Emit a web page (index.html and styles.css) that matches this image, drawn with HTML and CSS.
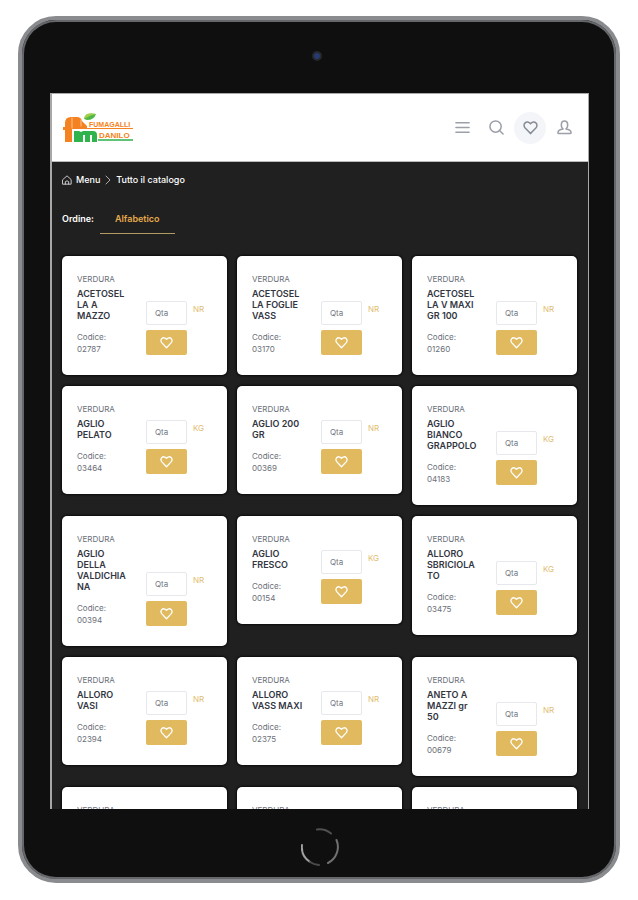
FILE: index.html
```html
<!DOCTYPE html>
<html lang="it">
  <head>
    <title>Tutto il catalogo</title>
    <meta charset="utf-8">
    <meta name="viewport" content="width=device-width, initial-scale=1">
    <link rel="stylesheet" href="styles.css">
  </head>
  <body>

  <svg class="symbols" aria-hidden="true">
    <symbol id="heart" viewBox="0 0 16 16">
      <path d="M8 14.500 2.300 8.500C.7 6.700.8 4.300 2.300 3 3.900 1.600 6.300 1.900 8 4 9.700 1.900 12.100 1.600 13.700 3c1.500 1.300 1.600 3.700 0 5.500Z"/>
    </symbol>
  </svg>

  <div class="tablet">
    <div class="camera"></div>

    <div class="screen">
      <header class="header">
        <a class="logo" href="#">
          <svg viewBox="0 0 70 30" role="img" aria-label="Fumagalli Danilo">
            <path fill="#f58220" d="M2 29V17H0v-3h2V10q0-6 6-6h6q4 0 5 4l5 5v3H9v13z"/>
            <path stroke="#fbc08e" fill="none" d="M9 5v10M18 7v6"/>
            <path fill="#2fb44b" d="M11 29V18h5l2 1 2-1h10q4 0 4 4v7h-5v-7h-2v7h-5v-7h-2v7z"/>
            <path fill="#4fb848" d="M21 6q1-7 12-5-2 6-9 6z"/>
            <path fill="#a6cf46" d="M21 6q1-7 12-5-6 1-12 5z"/>
            <text x="26" y="14" class="logo-text">FUMAGALLI</text>
            <path fill="#f58220" d="M23 15h47v1H23z"/>
            <text x="36" y="25" class="logo-text logo-text-big">DANILO</text>
            <path fill="#5fc477" d="M35 26h35v2H35z"/>
          </svg>
        </a>
        <nav class="tools">
          <button class="tool" aria-label="Menu">
            <svg viewBox="0 0 16 16"><path d="M1 3h14M1 8h14M1 13h14"/></svg>
          </button>
          <button class="tool" aria-label="Cerca">
            <svg viewBox="0 0 16 16"><circle cx="7" cy="7" r="6"/><path d="m11 11 4 4"/></svg>
          </button>
          <button class="tool active" aria-label="Preferiti">
            <svg><use href="#heart"/></svg>
          </button>
          <button class="tool" aria-label="Profilo">
            <svg viewBox="0 0 16 16"><path d="M8 1C3.500 1 4 8 6.500 9.500 3 10 1 11.500 1 13.500q0 1 1 1h12q1 0 1-1c0-2-2-3.500-5.500-4C12 8 12.500 1 8 1Z"/></svg>
          </button>
        </nav>
      </header>

      <main class="content">
        <nav class="breadcrumb">
          <a href="#">
            <svg class="home" viewBox="0 0 12 12"><path d="M1 5.500 6 1l5 4.500V11H1zM4 11V8q2-2 4 0v3"/></svg>
            Menu
          </a>
          <svg class="chevron" viewBox="0 0 6 10"><path d="m1 1 4 4-4 4"/></svg>
          <span>Tutto il catalogo</span>
        </nav>

        <div class="order">
          <span>Ordine:</span>
          <a class="tab" href="#">Alfabetico</a>
        </div>

        <div class="products">
          <article class="card">
            <div class="info">
              <p class="category">VERDURA</p>
              <h2>ACETOSEL<br>LA A<br>MAZZO</h2>
              <p class="code">Codice:<br>02787</p>
            </div>
            <div class="buy">
              <input type="text" placeholder="Qta" aria-label="Quantità">
              <button aria-label="Aggiungi"><svg><use href="#heart"/></svg></button>
            </div>
            <span class="unit">NR</span>
          </article>
          <article class="card">
            <div class="info">
              <p class="category">VERDURA</p>
              <h2>ACETOSEL<br>LA FOGLIE<br>VASS</h2>
              <p class="code">Codice:<br>03170</p>
            </div>
            <div class="buy">
              <input type="text" placeholder="Qta" aria-label="Quantità">
              <button aria-label="Aggiungi"><svg><use href="#heart"/></svg></button>
            </div>
            <span class="unit">NR</span>
          </article>
          <article class="card">
            <div class="info">
              <p class="category">VERDURA</p>
              <h2>ACETOSEL<br>LA V MAXI<br>GR 100</h2>
              <p class="code">Codice:<br>01260</p>
            </div>
            <div class="buy">
              <input type="text" placeholder="Qta" aria-label="Quantità">
              <button aria-label="Aggiungi"><svg><use href="#heart"/></svg></button>
            </div>
            <span class="unit">NR</span>
          </article>

          <article class="card">
            <div class="info">
              <p class="category">VERDURA</p>
              <h2>AGLIO<br>PELATO</h2>
              <p class="code">Codice:<br>03464</p>
            </div>
            <div class="buy">
              <input type="text" placeholder="Qta" aria-label="Quantità">
              <button aria-label="Aggiungi"><svg><use href="#heart"/></svg></button>
            </div>
            <span class="unit">KG</span>
          </article>
          <article class="card">
            <div class="info">
              <p class="category">VERDURA</p>
              <h2>AGLIO 200<br>GR</h2>
              <p class="code">Codice:<br>00369</p>
            </div>
            <div class="buy">
              <input type="text" placeholder="Qta" aria-label="Quantità">
              <button aria-label="Aggiungi"><svg><use href="#heart"/></svg></button>
            </div>
            <span class="unit">NR</span>
          </article>
          <article class="card">
            <div class="info">
              <p class="category">VERDURA</p>
              <h2>AGLIO<br>BIANCO<br>GRAPPOLO</h2>
              <p class="code">Codice:<br>04183</p>
            </div>
            <div class="buy">
              <input type="text" placeholder="Qta" aria-label="Quantità">
              <button aria-label="Aggiungi"><svg><use href="#heart"/></svg></button>
            </div>
            <span class="unit">KG</span>
          </article>

          <article class="card">
            <div class="info">
              <p class="category">VERDURA</p>
              <h2>AGLIO<br>DELLA<br>VALDICHIA<br>NA</h2>
              <p class="code">Codice:<br>00394</p>
            </div>
            <div class="buy">
              <input type="text" placeholder="Qta" aria-label="Quantità">
              <button aria-label="Aggiungi"><svg><use href="#heart"/></svg></button>
            </div>
            <span class="unit">NR</span>
          </article>
          <article class="card">
            <div class="info">
              <p class="category">VERDURA</p>
              <h2>AGLIO<br>FRESCO</h2>
              <p class="code">Codice:<br>00154</p>
            </div>
            <div class="buy">
              <input type="text" placeholder="Qta" aria-label="Quantità">
              <button aria-label="Aggiungi"><svg><use href="#heart"/></svg></button>
            </div>
            <span class="unit">KG</span>
          </article>
          <article class="card">
            <div class="info">
              <p class="category">VERDURA</p>
              <h2>ALLORO<br>SBRICIOLA<br>TO</h2>
              <p class="code">Codice:<br>03475</p>
            </div>
            <div class="buy">
              <input type="text" placeholder="Qta" aria-label="Quantità">
              <button aria-label="Aggiungi"><svg><use href="#heart"/></svg></button>
            </div>
            <span class="unit">KG</span>
          </article>

          <article class="card">
            <div class="info">
              <p class="category">VERDURA</p>
              <h2>ALLORO<br>VASI</h2>
              <p class="code">Codice:<br>02394</p>
            </div>
            <div class="buy">
              <input type="text" placeholder="Qta" aria-label="Quantità">
              <button aria-label="Aggiungi"><svg><use href="#heart"/></svg></button>
            </div>
            <span class="unit">NR</span>
          </article>
          <article class="card">
            <div class="info">
              <p class="category">VERDURA</p>
              <h2>ALLORO<br>VASS MAXI</h2>
              <p class="code">Codice:<br>02375</p>
            </div>
            <div class="buy">
              <input type="text" placeholder="Qta" aria-label="Quantità">
              <button aria-label="Aggiungi"><svg><use href="#heart"/></svg></button>
            </div>
            <span class="unit">NR</span>
          </article>
          <article class="card">
            <div class="info">
              <p class="category">VERDURA</p>
              <h2>ANETO A<br>MAZZI gr<br>50</h2>
              <p class="code">Codice:<br>00679</p>
            </div>
            <div class="buy">
              <input type="text" placeholder="Qta" aria-label="Quantità">
              <button aria-label="Aggiungi"><svg><use href="#heart"/></svg></button>
            </div>
            <span class="unit">NR</span>
          </article>

          <article class="card">
            <div class="info"><p class="category">VERDURA</p></div>
          </article>
          <article class="card">
            <div class="info"><p class="category">VERDURA</p></div>
          </article>
          <article class="card">
            <div class="info"><p class="category">VERDURA</p></div>
          </article>
        </div>
      </main>
    </div>

    <svg class="home-button" viewBox="0 0 38 38">
      <path stroke="#a0a0a0" d="M1 17a18 18 0 0 0 8 17"/>
      <path stroke="#4a4a4a" d="M9 34a18 18 0 0 0 9 3"/>
      <path stroke="#707070" d="M27 35a18 18 0 0 0 8.500-23"/>
      <path stroke="#505050" d="M16 1.500a18 18 0 0 1 14 4"/>
    </svg>
  </div>

  </body>
</html>
```
FILE: styles.css
```css
* {
  box-sizing: border-box;
}
body {
  margin: 0;
  padding: 16px 18px 17px;
  height: 100vh;
  background: #fff;
  font-family: Inter, "Liberation Sans", sans-serif;
  font-size: 9px;
  line-height: 12px;
}
p, h2 {
  margin: 0;
}
a {
  color: inherit;
  text-decoration: none;
}
button {
  padding: 0;
  border: 0;
  background: none;
  cursor: pointer;
}
svg {
  fill: none;
  stroke-linecap: round;
  stroke-linejoin: round;
}
.symbols {
  display: none;
}

/* tablet frame */
.tablet {
  display: flex;
  flex-direction: column;
  align-items: center;
  height: 100%;
  padding: 0 27px 0 28px;
  border: 4px solid #8a8b8f;
  border-radius: 38px;
  background: #0f0f0f;
  box-shadow: inset 0 0 0 2px #66676a;
}
.camera {
  flex: none;
  width: 10px;
  height: 10px;
  margin: 31px 6px 32px 0;
  border: 2px solid #26282b;
  border-radius: 50%;
  background: #263c70;
}
.home-button {
  flex: none;
  width: 38px;
  height: 38px;
  margin: 19px 0 13px;
  stroke-width: 2;
}
.screen {
  flex: 1;
  width: 100%;
  min-height: 0;
  overflow: hidden;
  border: solid #a8a8a8;
  border-width: 1px 1px 0 2px;
  background: #202020;
}

/* header */
.header {
  display: flex;
  align-items: center;
  justify-content: space-between;
  height: 68px;
  padding: 0 8px 0 11px;
  border-bottom: 1px solid #bbb;
  background: #fff;
}
.logo svg {
  display: block;
  width: 70px;
  height: 30px;
}
.logo-text {
  fill: #f58220;
  font: bold 7px "Liberation Sans", sans-serif;
}
.logo-text-big {
  font-size: 8px;
}
.tools {
  display: flex;
  gap: 2px;
}
.tool {
  display: flex;
  align-items: center;
  justify-content: center;
  width: 32px;
  height: 32px;
  border-radius: 50%;
}
.tool svg {
  width: 15px;
  height: 15px;
  stroke: #9b9fa8;
  stroke-width: 1.6;
}
.tool.active {
  background: #f3f5f9;
}
.tool.active svg {
  stroke: #858a94;
}

.content {
  padding: 12px 11px 12px 10px;
  color: #fff;
  font-weight: 500;
}
.breadcrumb, .breadcrumb a {
  display: flex;
  align-items: center;
}
.breadcrumb {
  gap: 5px;
}
.breadcrumb a {
  gap: 4px;
}
.home {
  width: 10px;
  height: 10px;
  stroke: #e8e8e8;
}
.chevron {
  width: 6px;
  height: 10px;
  stroke: #aaa;
}
.order {
  display: flex;
  gap: 6px;
  padding: 27px 0 22px;
  font-weight: 600;
}
.tab {
  padding: 0 15px 8px;
  border-bottom: 1px solid #b29a64;
  color: #e5a94b;
}

/* products */
.products {
  display: grid;
  grid-template-columns: repeat(3, 1fr);
  gap: 11px 10px;
  align-items: start;
}
.card {
  display: grid;
  grid-template-columns: 1fr 41px 25px;
  align-items: end;
  padding: 16px 15px 20px;
  border-radius: 5px;
  background: #fff;
  box-shadow: 0 0 2px 1px #0b0b0b;
  color: #6b6f78;
  font-weight: 400;
}
.category {
  font-size: 8px;
  line-height: 14px;
}
.card h2 {
  margin: 2px 0 10px;
  color: #33363f;
  font-size: 9px;
  font-weight: 600;
  line-height: 11px;
  white-space: nowrap;
}
.code {
  font-size: 8px;
}
.buy {
  display: grid;
  gap: 5px;
}
.buy input {
  width: 100%;
  height: 24px;
  padding: 0 8px;
  border: 1px solid #e6e8ee;
  border-radius: 2px;
  background: #fff;
  font: 8px Inter, "Liberation Sans", sans-serif;
}
.buy input::placeholder {
  color: #747883;
}
.buy button {
  display: flex;
  align-items: center;
  justify-content: center;
  height: 25px;
  border-radius: 2px;
  background: #e1b95f;
}
.buy button svg {
  width: 13px;
  height: 13px;
  stroke: #fff;
  stroke-width: 1.6;
}
.unit {
  height: 54px;
  padding-left: 6px;
  color: #dfbd72;
  font-size: 8px;
  line-height: 16px;
}
```
